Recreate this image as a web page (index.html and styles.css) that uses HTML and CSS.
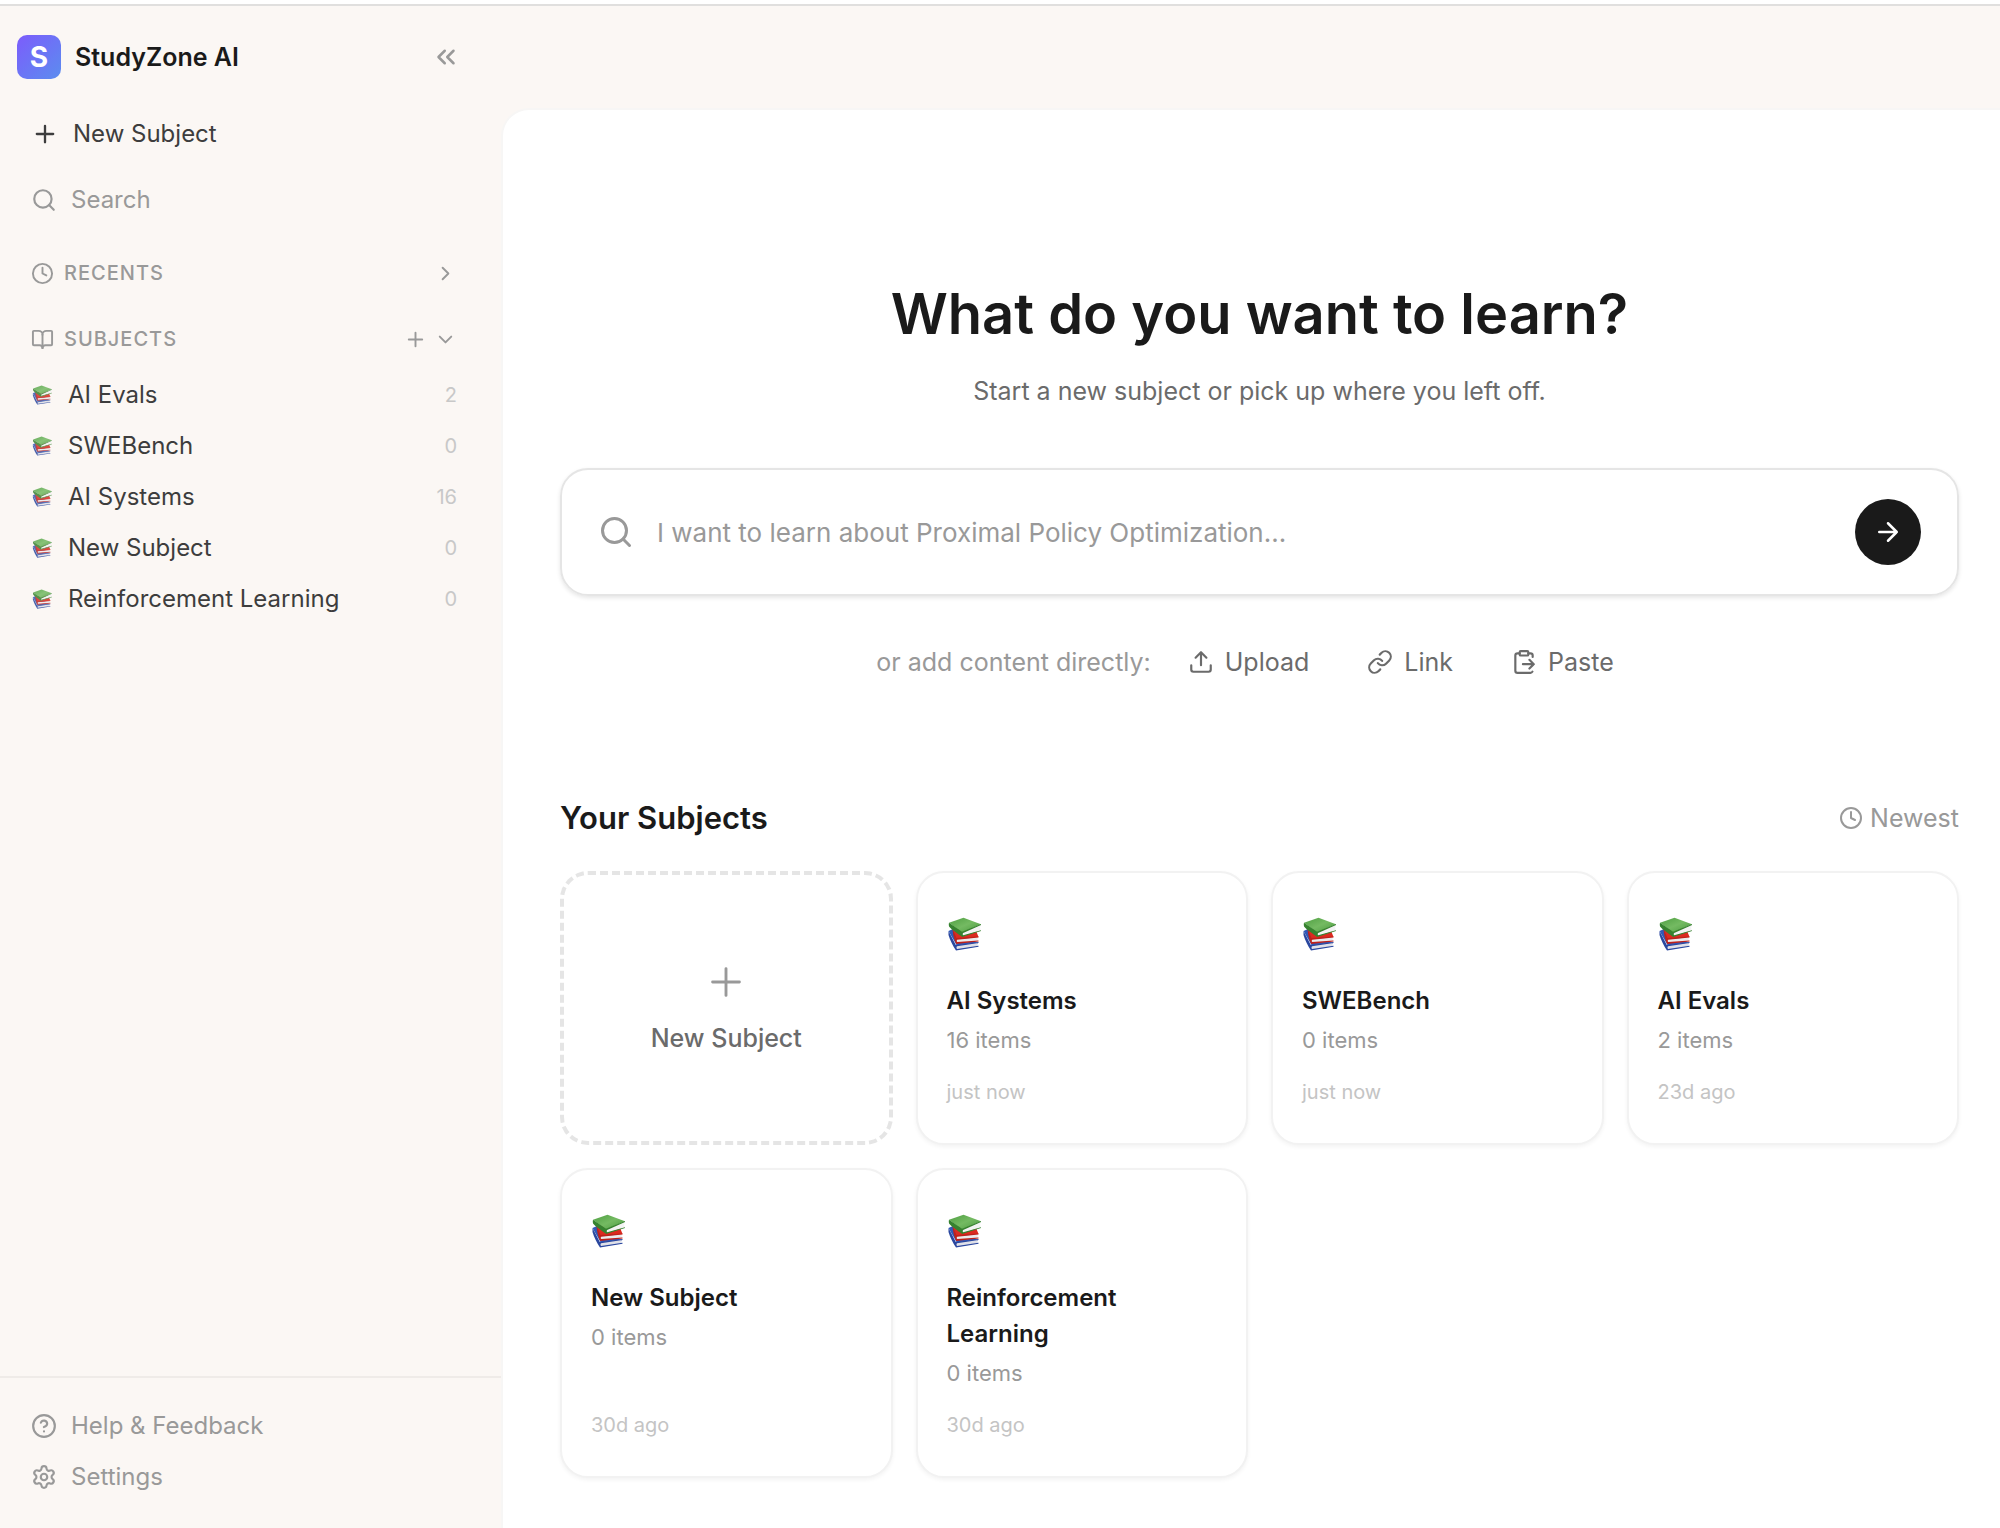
FILE: index.html
```html
<!DOCTYPE html>
<html lang="en">
<head>
  <meta charset="UTF-8">
  <meta name="viewport" content="width=device-width, initial-scale=1.0">
  <title>StudyZone AI</title>
  <link rel="stylesheet" href="styles.css">
</head>
<body>
  <!-- Icon sprite -->
  <svg class="sprite" aria-hidden="true">
    <defs>
      <linearGradient id="green-cover" x1="0" y1="0" x2="1" y2="1">
        <stop offset="0" stop-color="#4f9f42"/>
        <stop offset="0.5" stop-color="#74ba62"/>
        <stop offset="1" stop-color="#4a9a3e"/>
      </linearGradient>
    </defs>
    <symbol id="icon-plus" viewBox="0 0 24 24"><path d="M5 12h14M12 5v14"/></symbol>
    <symbol id="icon-search" viewBox="0 0 24 24"><circle cx="11" cy="11" r="8"/><path d="m21 21-4.3-4.3"/></symbol>
    <symbol id="icon-clock" viewBox="0 0 24 24"><circle cx="12" cy="12" r="10"/><path d="M12 6v6l4 2"/></symbol>
    <symbol id="icon-book" viewBox="0 0 24 24"><path d="M12 7v14"/><path d="M3 18a1 1 0 0 1-1-1V4a1 1 0 0 1 1-1h5a4 4 0 0 1 4 4 4 4 0 0 1 4-4h5a1 1 0 0 1 1 1v13a1 1 0 0 1-1 1h-6a3 3 0 0 0-3 3 3 3 0 0 0-3-3z"/></symbol>
    <symbol id="icon-right" viewBox="0 0 24 24"><path d="m9 18 6-6-6-6"/></symbol>
    <symbol id="icon-down" viewBox="0 0 24 24"><path d="m6 9 6 6 6-6"/></symbol>
    <symbol id="icon-collapse" viewBox="0 0 24 24"><path d="m11 17-5-5 5-5M18 17l-5-5 5-5"/></symbol>
    <symbol id="icon-help" viewBox="0 0 24 24"><circle cx="12" cy="12" r="10"/><path d="M9.09 9a3 3 0 0 1 5.83 1c0 2-3 3-3 3M12 17h.01"/></symbol>
    <symbol id="icon-settings" viewBox="0 0 24 24"><path d="M9.671 4.136a2.34 2.34 0 0 1 4.659 0 2.34 2.34 0 0 0 3.319 1.915 2.34 2.34 0 0 1 2.33 4.033 2.34 2.34 0 0 0 0 3.831 2.34 2.34 0 0 1-2.33 4.033 2.34 2.34 0 0 0-3.319 1.915 2.34 2.34 0 0 1-4.659 0 2.34 2.34 0 0 0-3.32-1.915 2.34 2.34 0 0 1-2.33-4.033 2.34 2.34 0 0 0 0-3.831A2.34 2.34 0 0 1 6.35 6.051a2.34 2.34 0 0 0 3.319-1.915"/><circle cx="12" cy="12" r="3"/></symbol>
    <symbol id="icon-arrow" viewBox="0 0 24 24"><path d="M5 12h14M12 5l7 7-7 7"/></symbol>
    <symbol id="icon-upload" viewBox="0 0 24 24"><path d="M12 3v12M17 8l-5-5-5 5M21 15v4a2 2 0 0 1-2 2H5a2 2 0 0 1-2-2v-4"/></symbol>
    <symbol id="icon-link" viewBox="0 0 24 24"><path d="M10 13a5 5 0 0 0 7.54.54l3-3a5 5 0 0 0-7.07-7.07l-1.72 1.71"/><path d="M14 11a5 5 0 0 0-7.54-.54l-3 3a5 5 0 0 0 7.07 7.07l1.71-1.71"/></symbol>
    <symbol id="icon-paste" viewBox="0 0 24 24"><rect x="8" y="2" width="8" height="4" rx="1"/><path d="M11 14h10M17 18l4-4-4-4M16 4h2a2 2 0 0 1 2 2v1.344M8 4H6a2 2 0 0 0-2 2v14a2 2 0 0 0 2 2h12a2 2 0 0 0 1.793-1.113"/></symbol>
    <symbol id="icon-books" viewBox="0 0 36 34">
      <!-- blue book -->
      <path d="M1.500 14 6 12l25 14-1 1-20 2z" fill="#3059b8"/>
      <path d="M9.500 28.500 31 25.500c-.7 1.200-.7 2.800 0 4L10 33c-1.500-.8-1.700-3-.5-4.500z" fill="#dfe0e8"/>
      <path d="M1.500 14 8.800 28 31.500 25v1L10 29.300c-.8 1-.6 2 .1 2.800l21.400-3.300v1L9 33.500C6 29 3 23 1.500 18z" fill="#2a479f"/>
      <!-- red book -->
      <path d="M5.500 12 28 11l3.500 9-22 2z" fill="#dc2a20"/>
      <path d="M9.500 22 31 20.500c-.6 1.200-.6 2.500 0 3.700L10 26c-1.500-.7-1.700-2.800-.5-4z" fill="#ecebed"/>
      <path d="M5.500 12 9.500 21 31.500 19.500v1L10.200 22.700c-.8.800-.6 1.800.1 2.300l21.200-1.500v1L9.200 27C7.200 23 6 18 5.500 12z" fill="#bf211a"/>
      <!-- green book -->
      <path d="M2 5.800 16.500.8 34 7.200 15 15.500z" fill="url(#green-cover)"/>
      <path d="M15 15.500 34 7.500c-1 2.200-1 4-.3 6L16 19c-1.700-.6-2-2.500-1-3.500z" fill="#f3f3f3"/>
      <path d="M2 5.800 15 14.800 34 7v1L16.200 16c-.7.800-.6 1.600 0 2.200l17.800-5v.9l-18.800 6C10 16 5 13 2.200 9.800 1.700 8.500 1.700 7 2 5.800z" fill="#36822f"/>
    </symbol>
  </svg>

  <div class="topline"></div>

  <div class="layout">
    <aside class="sidebar">
      <header class="brand">
        <span class="logo">S</span>
        <span class="brand-name">StudyZone AI</span>
        <button class="icon-button" type="button" aria-label="Collapse sidebar"><svg class="icon icon-lg"><use href="#icon-collapse"/></svg></button>
      </header>

      <button class="nav-item nav-new" type="button"><svg class="icon"><use href="#icon-plus"/></svg>New Subject</button>
      <label class="nav-item nav-search">
        <svg class="icon"><use href="#icon-search"/></svg>
        <input type="text" placeholder="Search" aria-label="Search">
      </label>

      <div class="section">
        <svg class="icon icon-sm"><use href="#icon-clock"/></svg>
        <h2>Recents</h2>
        <button class="icon-button" type="button" aria-label="Expand recents"><svg class="icon icon-sm"><use href="#icon-right"/></svg></button>
      </div>

      <div class="section">
        <svg class="icon icon-sm"><use href="#icon-book"/></svg>
        <h2>Subjects</h2>
        <button class="icon-button" type="button" aria-label="Add subject"><svg class="icon icon-sm"><use href="#icon-plus"/></svg></button>
        <button class="icon-button" type="button" aria-label="Collapse subjects"><svg class="icon icon-sm"><use href="#icon-down"/></svg></button>
      </div>

      <nav class="subject-list">
        <a class="subject" href="#"><svg class="books"><use href="#icon-books"/></svg>AI Evals<span class="count">2</span></a>
        <a class="subject" href="#"><svg class="books"><use href="#icon-books"/></svg>SWEBench<span class="count">0</span></a>
        <a class="subject" href="#"><svg class="books"><use href="#icon-books"/></svg>AI Systems<span class="count">16</span></a>
        <a class="subject" href="#"><svg class="books"><use href="#icon-books"/></svg>New Subject<span class="count">0</span></a>
        <a class="subject" href="#"><svg class="books"><use href="#icon-books"/></svg>Reinforcement Learning<span class="count">0</span></a>
      </nav>

      <footer class="sidebar-footer">
        <a class="nav-item" href="#"><svg class="icon"><use href="#icon-help"/></svg>Help &amp; Feedback</a>
        <a class="nav-item" href="#"><svg class="icon"><use href="#icon-settings"/></svg>Settings</a>
      </footer>
    </aside>

    <main class="panel">
      <section class="hero">
        <h1>What do you want to learn?</h1>
        <p class="subtitle">Start a new subject or pick up where you left off.</p>

        <form class="ask">
          <svg class="icon icon-xl"><use href="#icon-search"/></svg>
          <input type="text" placeholder="I want to learn about Proximal Policy Optimization..." aria-label="What do you want to learn?">
          <button class="submit" type="button" aria-label="Start"><svg class="icon"><use href="#icon-arrow"/></svg></button>
        </form>

        <div class="add">
          <span class="add-label">or add content directly:</span>
          <button type="button"><svg class="icon"><use href="#icon-upload"/></svg>Upload</button>
          <button type="button"><svg class="icon"><use href="#icon-link"/></svg>Link</button>
          <button type="button"><svg class="icon"><use href="#icon-paste"/></svg>Paste</button>
        </div>
      </section>

      <section>
        <div class="subjects-head">
          <h2>Your Subjects</h2>
          <button class="sort" type="button"><svg class="icon"><use href="#icon-clock"/></svg>Newest</button>
        </div>

        <div class="cards">
          <button class="card card-new" type="button"><svg class="icon icon-plus-lg"><use href="#icon-plus"/></svg>New Subject</button>
          <a class="card" href="#">
            <svg class="books"><use href="#icon-books"/></svg>
            <h3>AI Systems</h3>
            <p class="items">16 items</p>
            <p class="time">just now</p>
          </a>
          <a class="card" href="#">
            <svg class="books"><use href="#icon-books"/></svg>
            <h3>SWEBench</h3>
            <p class="items">0 items</p>
            <p class="time">just now</p>
          </a>
          <a class="card" href="#">
            <svg class="books"><use href="#icon-books"/></svg>
            <h3>AI Evals</h3>
            <p class="items">2 items</p>
            <p class="time">23d ago</p>
          </a>
          <a class="card" href="#">
            <svg class="books"><use href="#icon-books"/></svg>
            <h3>New Subject</h3>
            <p class="items">0 items</p>
            <p class="time">30d ago</p>
          </a>
          <a class="card" href="#">
            <svg class="books"><use href="#icon-books"/></svg>
            <h3>Reinforcement Learning</h3>
            <p class="items">0 items</p>
            <p class="time">30d ago</p>
          </a>
        </div>
      </section>
    </main>
  </div>
</body>
</html>
```
FILE: styles.css
```css
* {
  box-sizing: border-box;
}

body {
  display: flex;
  flex-direction: column;
  min-height: 100vh;
  margin: 0;
  font-family: Inter, "Liberation Sans", sans-serif;
  font-size: 24px;
  color: #1a1a1a;
  background-color: #fbf7f4;
}

h1, h2, h3, p {
  margin: 0;
}

a {
  color: inherit;
  text-decoration: none;
}

button, input {
  padding: 0;
  border: 0;
  font: inherit;
  color: inherit;
  background: none;
}

button {
  cursor: pointer;
}

input {
  outline: none;
}

input::placeholder {
  color: #999;
  opacity: 1;
}

.sprite {
  position: absolute;
  width: 0;
  height: 0;
}

.icon {
  flex: none;
  width: 26px;
  height: 26px;
  fill: none;
  stroke: currentColor;
  stroke-width: 2;
  stroke-linecap: round;
  stroke-linejoin: round;
}

.icon-sm {
  width: 23px;
  height: 23px;
}

.icon-lg {
  width: 30px;
  height: 30px;
}

.icon-xl {
  width: 36px;
  height: 36px;
}

.icon-button {
  display: flex;
  color: #999;
}

.topline {
  height: 6px;
  background-color: #fff;
  border-bottom: 2px solid #e0dfde;
}

.layout {
  display: grid;
  grid-template-columns: 501px 1fr;
  flex: 1;
}

/* Sidebar */
.sidebar {
  display: flex;
  flex-direction: column;
}

.brand {
  display: flex;
  align-items: center;
  margin-bottom: 29px;
  padding: 29px 40px 0 17px;
}

.logo {
  width: 44px;
  height: 44px;
  margin-right: 14px;
  border-radius: 10px;
  font-weight: 700;
  font-size: 28px;
  line-height: 44px;
  text-align: center;
  color: #fff;
  background: linear-gradient(135deg, #7c5cfc, #5b8def);
}

.brand-name {
  flex: 1;
  font-size: 25px;
  font-weight: 600;
}

.nav-item {
  display: flex;
  align-items: center;
  gap: 14px;
  height: 51px;
  padding: 0 41px 0 31px;
  color: #999;
}

.nav-new {
  margin-bottom: 15px;
  color: #3d3d3d;
}

.nav-new .icon {
  width: 28px;
  height: 28px;
}

.nav-search {
  margin-bottom: 23px;
}

.nav-search input {
  flex: 1;
  min-width: 0;
}

.section {
  display: flex;
  align-items: center;
  gap: 7px;
  height: 50px;
  margin-bottom: 16px;
  padding: 0 44px 0 31px;
  color: #999;
}

.section h2 {
  flex: 1;
  margin-left: 3px;
  font-size: 20px;
  font-weight: 500;
  letter-spacing: 1px;
  text-transform: uppercase;
}

.subject-list {
  margin-top: -11px;
}

.subject {
  display: flex;
  align-items: center;
  height: 51px;
  padding: 0 44px 0 32px;
  color: #3d3d3d;
}

.subject .books {
  width: 21px;
  height: 20px;
  margin-right: 15px;
  opacity: 0.85;
}

.count {
  margin-left: auto;
  font-size: 20px;
  color: #c8c8c8;
}

.sidebar-footer {
  margin-top: auto;
  padding: 22px 0 26px;
  border-top: 2px solid #efebe8;
}

/* Main panel */
.panel {
  margin-top: 102px;
  padding: 168px 41px 48px 57px;
  border: 2px solid #f7f6f5;
  border-width: 2px 0 0 2px;
  border-radius: 28px 0 0 0;
  background-color: #fff;
}

.hero {
  display: flex;
  flex-direction: column;
  align-items: center;
}

.hero h1 {
  margin-bottom: 21px;
  font-size: 56px;
  font-weight: 600;
  line-height: 72px;
}

.subtitle {
  margin-bottom: 57px;
  font-size: 25px;
  line-height: 40px;
  color: #6b6b6b;
}

.ask {
  display: flex;
  align-items: center;
  gap: 23px;
  width: 100%;
  height: 128px;
  margin-bottom: 41px;
  padding: 0 36px;
  border: 2px solid #e5e5e5;
  border-radius: 28px;
  font-size: 26px;
  color: #999;
  box-shadow: 0 2px 4px rgba(0, 0, 0, 0.1);
}

.ask input {
  flex: 1;
  min-width: 0;
}

.submit {
  display: flex;
  align-items: center;
  justify-content: center;
  width: 66px;
  height: 66px;
  border-radius: 50%;
  color: #fff;
  background-color: #1a1a1a;
}

.submit .icon {
  width: 30px;
  height: 30px;
}

.add {
  display: flex;
  align-items: center;
  height: 50px;
  margin-bottom: 111px;
  font-size: 25px;
  color: #6b6b6b;
}

.add-label {
  margin-right: 8px;
  color: #999;
}

.add button {
  display: flex;
  align-items: center;
  gap: 11px;
  padding: 0 29px;
}

.subjects-head {
  display: flex;
  align-items: center;
  justify-content: space-between;
  margin-bottom: 33px;
}

.subjects-head h2 {
  font-size: 31px;
  font-weight: 600;
  line-height: 40px;
}

.sort {
  display: flex;
  align-items: center;
  gap: 7px;
  font-size: 25px;
  color: #999;
}

.sort .icon {
  width: 24px;
  height: 24px;
}

.cards {
  display: grid;
  grid-template-columns: repeat(4, 1fr);
  gap: 23px;
}

.card {
  display: flex;
  flex-direction: column;
  min-height: 274px;
  padding: 44px 29px 36px;
  border: 2px solid #f2f2f2;
  border-radius: 28px;
  background-color: #fff;
  box-shadow: 0 2px 4px rgba(0, 0, 0, 0.05);
}

.card-new {
  align-items: center;
  justify-content: center;
  gap: 18px;
  padding: 0 0 4px;
  border: 4px dashed #e5e5e5;
  font-size: 25px;
  font-weight: 500;
  color: #6b6b6b;
  box-shadow: none;
}

.icon-plus-lg {
  width: 46px;
  height: 46px;
  stroke-width: 1.5;
  color: #999;
}

.card .books {
  width: 36px;
  height: 34px;
  margin-bottom: 32px;
}

.card h3 {
  margin-bottom: 5px;
  font-size: 24px;
  font-weight: 600;
  line-height: 36px;
}

.items {
  font-size: 22px;
  line-height: 32px;
  color: #999;
}

.time {
  margin-top: auto;
  padding-top: 21px;
  font-size: 20px;
  line-height: 30px;
  color: #c4c4c4;
}
```
